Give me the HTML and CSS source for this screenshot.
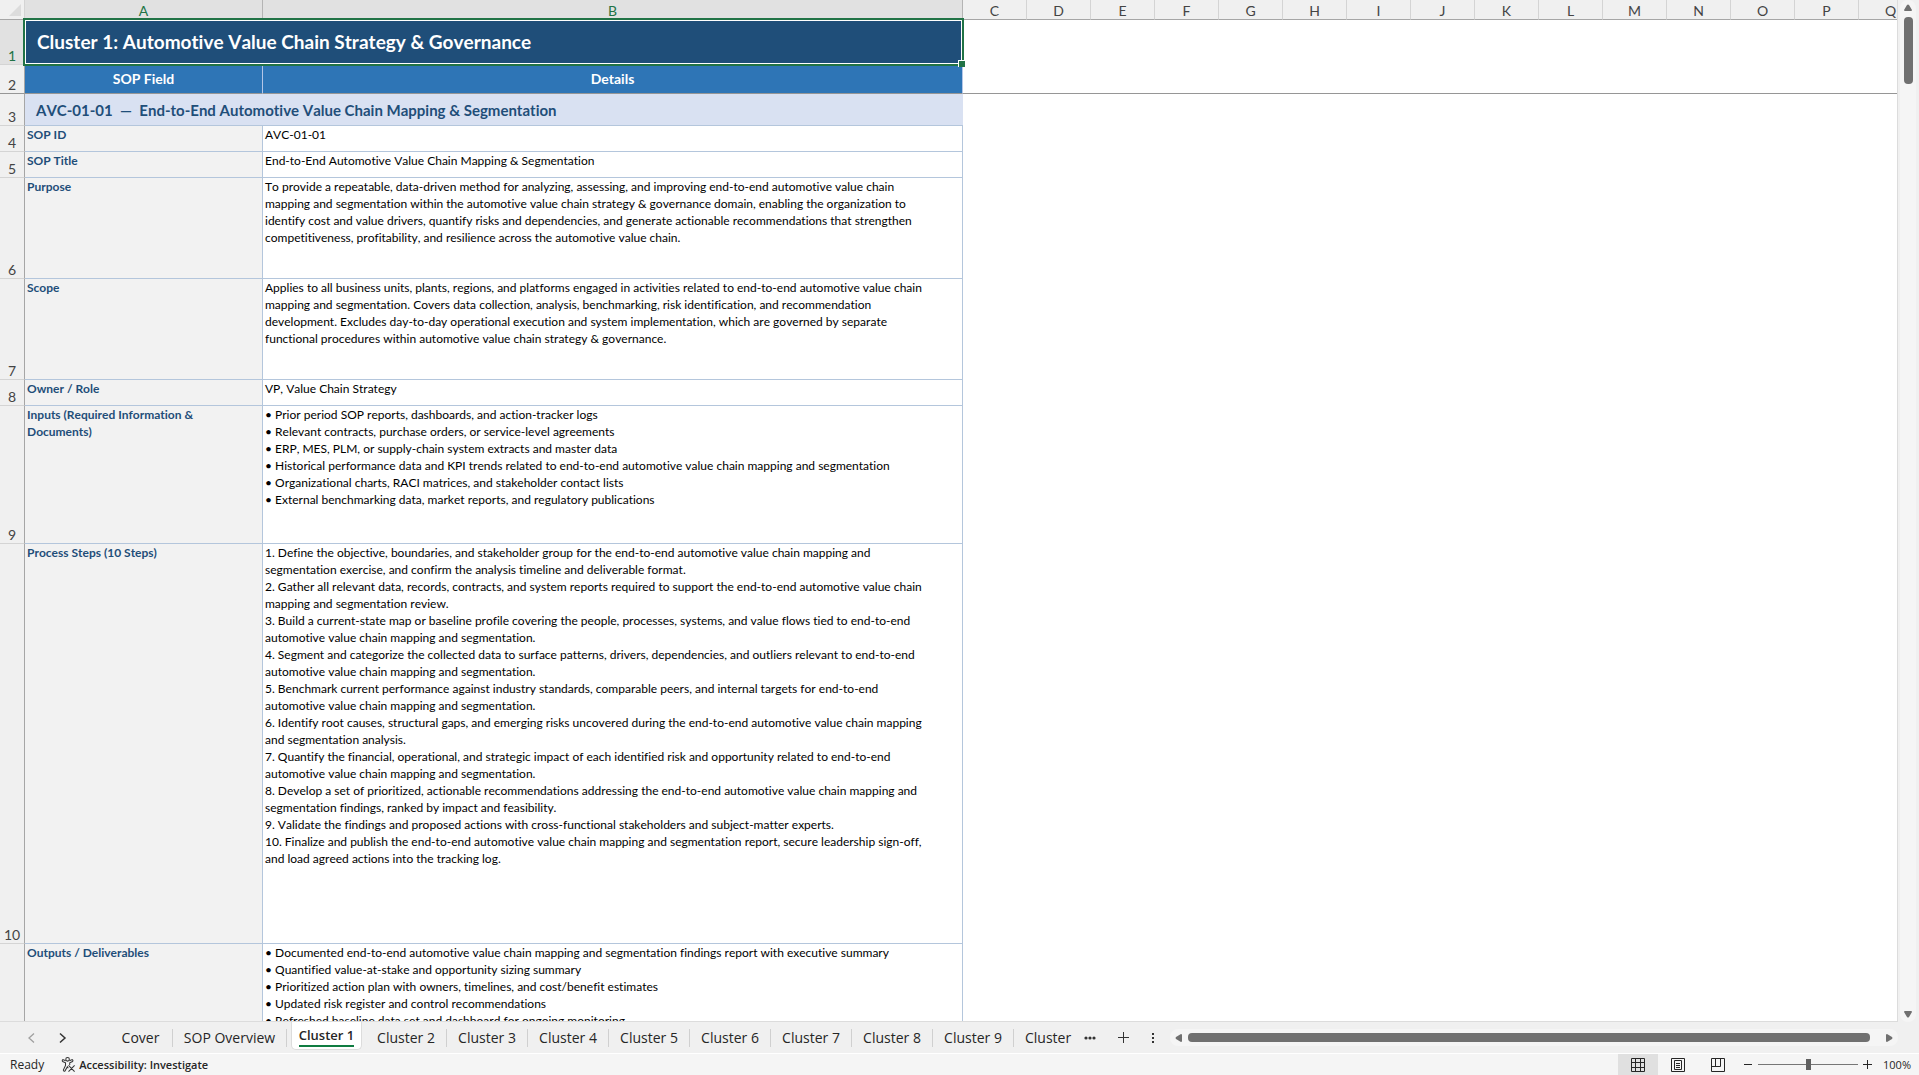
FILE: index.html
```html
<!DOCTYPE html>
<html lang="en">
<head>
    <meta charset="UTF-8">
    <meta name="viewport" content="width=device-width, initial-scale=1.0">
    <title>Cluster 1 - SOP Workbook</title>
    <link rel="stylesheet" href="styles.css">
</head>
<body>
    <div class="main">
        <div class="sheet">
            <table class="grid">
                <colgroup>
                    <col class="col-num"><col class="col-a"><col class="col-b">
                    <col class="col"><col class="col"><col class="col"><col class="col"><col class="col">
                    <col class="col"><col class="col"><col class="col"><col class="col"><col class="col">
                    <col class="col"><col class="col"><col class="col"><col class="col"><col class="col">
                </colgroup>
                <thead>
                    <tr>
                        <th class="corner"><svg width="12" height="12" viewBox="0 0 12 12"><path d="M12 0V12H0Z" fill="#dcdcdc"/></svg></th>
                        <th class="active">A</th><th class="active">B</th>
                        <th>C</th><th>D</th><th>E</th><th>F</th><th>G</th><th>H</th><th>I</th><th>J</th>
                        <th>K</th><th>L</th><th>M</th><th>N</th><th>O</th><th>P</th><th>Q</th>
                    </tr>
                </thead>
                <tbody>
                    <tr class="row-title">
                        <th class="active">1</th>
                        <td class="title" colspan="2">Cluster 1: Automotive Value Chain Strategy &amp; Governance<span class="selection"></span></td>
                        <td colspan="15"></td>
                    </tr>
                    <tr class="row-head">
                        <th>2</th>
                        <td class="head">SOP Field</td>
                        <td class="head">Details</td>
                        <td colspan="15"></td>
                    </tr>
                    <tr class="row-section">
                        <th>3</th>
                        <td class="section" colspan="2">AVC-01-01&nbsp; —&nbsp; End-to-End Automotive Value Chain Mapping &amp; Segmentation</td>
                    </tr>
                    <tr class="row-small">
                        <th>4</th>
                        <td class="field">SOP ID</td>
                        <td class="details">AVC-01-01</td>
                    </tr>
                    <tr class="row-small">
                        <th>5</th>
                        <td class="field">SOP Title</td>
                        <td class="details">End-to-End Automotive Value Chain Mapping &amp; Segmentation</td>
                    </tr>
                    <tr class="row-medium">
                        <th>6</th>
                        <td class="field">Purpose</td>
                        <td class="details">To provide a repeatable, data-driven method for analyzing, assessing, and improving end-to-end automotive value chain<br>
                            mapping and segmentation within the automotive value chain strategy &amp; governance domain, enabling the organization to<br>
                            identify cost and value drivers, quantify risks and dependencies, and generate actionable recommendations that strengthen<br>
                            competitiveness, profitability, and resilience across the automotive value chain.</td>
                    </tr>
                    <tr class="row-medium">
                        <th>7</th>
                        <td class="field">Scope</td>
                        <td class="details">Applies to all business units, plants, regions, and platforms engaged in activities related to end-to-end automotive value chain<br>
                            mapping and segmentation. Covers data collection, analysis, benchmarking, risk identification, and recommendation<br>
                            development. Excludes day-to-day operational execution and system implementation, which are governed by separate<br>
                            functional procedures within automotive value chain strategy &amp; governance.</td>
                    </tr>
                    <tr class="row-small">
                        <th>8</th>
                        <td class="field">Owner / Role</td>
                        <td class="details">VP, Value Chain Strategy</td>
                    </tr>
                    <tr class="row-inputs">
                        <th>9</th>
                        <td class="field">Inputs (Required Information &amp;<br>Documents)</td>
                        <td class="details">• Prior period SOP reports, dashboards, and action-tracker logs<br>
                            • Relevant contracts, purchase orders, or service-level agreements<br>
                            • ERP, MES, PLM, or supply-chain system extracts and master data<br>
                            • Historical performance data and KPI trends related to end-to-end automotive value chain mapping and segmentation<br>
                            • Organizational charts, RACI matrices, and stakeholder contact lists<br>
                            • External benchmarking data, market reports, and regulatory publications</td>
                    </tr>
                    <tr class="row-steps">
                        <th>10</th>
                        <td class="field">Process Steps (10 Steps)</td>
                        <td class="details">1. Define the objective, boundaries, and stakeholder group for the end-to-end automotive value chain mapping and<br>
                            segmentation exercise, and confirm the analysis timeline and deliverable format.<br>
                            2. Gather all relevant data, records, contracts, and system reports required to support the end-to-end automotive value chain<br>
                            mapping and segmentation review.<br>
                            3. Build a current-state map or baseline profile covering the people, processes, systems, and value flows tied to end-to-end<br>
                            automotive value chain mapping and segmentation.<br>
                            4. Segment and categorize the collected data to surface patterns, drivers, dependencies, and outliers relevant to end-to-end<br>
                            automotive value chain mapping and segmentation.<br>
                            5. Benchmark current performance against industry standards, comparable peers, and internal targets for end-to-end<br>
                            automotive value chain mapping and segmentation.<br>
                            6. Identify root causes, structural gaps, and emerging risks uncovered during the end-to-end automotive value chain mapping<br>
                            and segmentation analysis.<br>
                            7. Quantify the financial, operational, and strategic impact of each identified risk and opportunity related to end-to-end<br>
                            automotive value chain mapping and segmentation.<br>
                            8. Develop a set of prioritized, actionable recommendations addressing the end-to-end automotive value chain mapping and<br>
                            segmentation findings, ranked by impact and feasibility.<br>
                            9. Validate the findings and proposed actions with cross-functional stakeholders and subject-matter experts.<br>
                            10. Finalize and publish the end-to-end automotive value chain mapping and segmentation report, secure leadership sign-off,<br>
                            and load agreed actions into the tracking log.</td>
                    </tr>
                    <tr class="row-outputs">
                        <th></th>
                        <td class="field">Outputs / Deliverables</td>
                        <td class="details">• Documented end-to-end automotive value chain mapping and segmentation findings report with executive summary<br>
                            • Quantified value-at-stake and opportunity sizing summary<br>
                            • Prioritized action plan with owners, timelines, and cost/benefit estimates<br>
                            • Updated risk register and control recommendations<br>
                            • Refreshed baseline data set and dashboard for ongoing monitoring</td>
                    </tr>
                </tbody>
            </table>
        </div>
        <div class="vscroll">
            <button class="arrow" aria-label="Scroll up"><svg width="10" height="8" viewBox="0 0 10 8"><path d="M4 1Q5 0 6 1L9 6Q9 7 8 7H2Q1 7 1 6Z"/></svg></button>
            <div class="vthumb"></div>
            <button class="arrow" aria-label="Scroll down"><svg width="10" height="8" viewBox="0 0 10 8"><path d="M4 7Q5 8 6 7L9 2Q9 1 8 1H2Q1 1 1 2Z"/></svg></button>
        </div>
    </div>

    <div class="tabbar">
        <div class="tabnav">
            <button aria-label="Previous sheet"><svg width="8" height="12" viewBox="0 0 8 12"><path d="M7 1.500L2 6L7 10.500" fill="none" stroke="#a0a0a0" stroke-width="1.3"/></svg></button>
            <button aria-label="Next sheet"><svg width="8" height="12" viewBox="0 0 8 12"><path d="M1 1.500L6 6L1 10.500" fill="none" stroke="#333" stroke-width="1.5"/></svg></button>
        </div>
        <div class="tabs">
            <button class="tab cover">Cover</button>
            <button class="tab overview">SOP Overview</button>
            <button class="tab current"><span>Cluster 1</span></button>
            <button class="tab">Cluster 2</button>
            <button class="tab">Cluster 3</button>
            <button class="tab">Cluster 4</button>
            <button class="tab">Cluster 5</button>
            <button class="tab">Cluster 6</button>
            <button class="tab">Cluster 7</button>
            <button class="tab">Cluster 8</button>
            <button class="tab">Cluster 9</button>
            <button class="tab cut">Cluster 10</button>
        </div>
        <div class="tabtools">
            <button aria-label="More sheets"><svg width="12" height="4" viewBox="0 0 12 4" fill="#333"><circle cx="2" cy="2" r="1.6"/><circle cx="6" cy="2" r="1.6"/><circle cx="10" cy="2" r="1.6"/></svg></button>
            <button aria-label="New sheet"><svg width="12" height="12" viewBox="0 0 12 12"><path d="M5.500 0V11M0 5.500H11" fill="none" stroke="#333"/></svg></button>
            <button aria-label="Resize"><svg width="3" height="12" viewBox="0 0 3 12" fill="#333"><path d="M0 1H2V3H0ZM0 5H2V7H0ZM0 9H2V11H0Z"/></svg></button>
        </div>
        <div class="hscroll">
            <button class="arrow" aria-label="Scroll left"><svg width="8" height="10" viewBox="0 0 8 10"><path d="M1 4Q0 5 1 6L6 9Q7 9 7 8V2Q7 1 6 1Z"/></svg></button>
            <div class="hthumb"></div>
            <button class="arrow" aria-label="Scroll right"><svg width="8" height="10" viewBox="0 0 8 10"><path d="M7 4Q8 5 7 6L2 9Q1 9 1 8V2Q1 1 2 1Z"/></svg></button>
        </div>
    </div>

    <div class="statusbar">
        <span class="ready">Ready</span>
        <button class="access">
            <svg width="15" height="15" viewBox="0 0 15 16" fill="none" stroke="#333" stroke-width="1.1"><circle cx="6.500" cy="2.500" r="1.900"/><path d="M4.500 4L1.500 2.800Q0.300 3.600 1.300 4.800L4.300 6.200V9L2 14Q2.400 15.700 3.700 15L6.300 10.500L7.300 12M8.500 4L11.500 2.800Q12.800 3.600 11.800 4.800L8.800 6.200V8.500M7.500 9L14 15.500M14 9L7.500 15.500"/></svg>
            Accessibility: Investigate
        </button>
        <div class="views">
            <button class="view on" aria-label="Normal"><svg width="14" height="14" viewBox="0 0 14 14"><path d="M0.500 0.500H13.500V13.500H0.500ZM4.500 1V13M9.500 1V13M1 4.500H13M1 9.500H13"/></svg></button>
            <button class="view" aria-label="Page Layout"><svg width="14" height="14" viewBox="0 0 14 14"><path d="M0.500 0.500H13.500V13.500H0.500ZM3.500 2.500H10.500V11.500H3.500ZM5 5.500H9M5 7.500H9M5 9.500H9"/></svg></button>
            <button class="view" aria-label="Page Break Preview"><svg width="14" height="14" viewBox="0 0 14 14"><path d="M0.500 0.500H13.500V13.500H0.500ZM4.500 1V8.500M9.500 1V8.500M1 8.500H9.500"/></svg></button>
        </div>
        <div class="zoombar">
            <button aria-label="Zoom out"><svg width="9" height="9" viewBox="0 0 9 9"><path d="M0 4.500H8"/></svg></button>
            <input type="range" min="0" max="200" value="100" aria-label="Zoom">
            <button aria-label="Zoom in"><svg width="9" height="9" viewBox="0 0 9 9"><path d="M0 4.500H9M4.500 0V9"/></svg></button>
            <button class="percent">100%</button>
        </div>
    </div>
</body>
</html>
```

FILE: styles.css
```css
* {
    box-sizing: border-box;
}

body {
    margin: 0;
    height: 100vh;
    display: flex;
    flex-direction: column;
    overflow: hidden;
    background: #f0f0f0;
    font-family: "Open Sans", "Liberation Sans", sans-serif;
    color: #262626;
}

button {
    border: none;
    padding: 0;
    background: none;
    font-family: inherit;
    color: inherit;
    display: flex;
    align-items: center;
    justify-content: center;
}

/* worksheet */
.main {
    flex: 1;
    min-height: 0;
    display: flex;
}

.sheet {
    flex: 1;
    min-width: 0;
    overflow: hidden;
    background: white;
    border-right: 1px solid #dcdcdc;
    border-bottom: 1px solid #dcdcdc;
}

.grid {
    table-layout: fixed;
    width: 1923px;
    border-collapse: separate;
    border-spacing: 0;
    font-family: Lato, "Liberation Sans", sans-serif;
    font-kerning: none;
    font-variant-ligatures: none;
}

.col-num { width: 25px; }
.col-a { width: 238px; }
.col-b { width: 700px; }
.col { width: 64px; }

.grid th {
    padding: 0;
    vertical-align: bottom;
    background: #f0f0f0;
    color: #444;
    font-size: 14px;
    line-height: 16px;
    font-weight: normal;
}

thead th {
    height: 20px;
    border-right: 1px solid #d4d4d4;
    border-bottom: 1px solid #a6a6a6;
}

.corner svg {
    display: block;
    margin: 0 3px 3px auto;
}

.grid th.active {
    background: #e1e1e1;
    color: #217346;
}

thead th.active {
    border-right-color: #b4b4b4;
}

tbody th {
    border-right: 1px solid #a6a6a6;
    border-bottom: 1px solid #d4d4d4;
}

.grid td {
    padding: 0;
}

.row-title { height: 45px; }
.row-head { height: 29px; }
.row-section { height: 32px; }
.row-small { height: 26px; }
.row-medium { height: 101px; }
.row-inputs { height: 138px; }
.row-steps { height: 400px; }
.row-outputs { height: 138px; }

.grid .title {
    position: relative;
    padding: 0 0 2px 12px;
    background: #1f4e79;
    color: white;
    font-size: 19px;
    font-weight: bold;
}

.selection {
    position: absolute;
    inset: -2px -1px -1px -2px;
    border: 2px solid #217346;
    box-shadow: inset 0 0 0 1px white;
}

.selection::after {
    content: "";
    position: absolute;
    right: -3px;
    bottom: -3px;
    width: 6px;
    height: 6px;
    background: #217346;
    border-top: 1px solid white;
    border-left: 1px solid white;
}

.grid .head {
    background: #2e75b6;
    border-right: 1px solid #b4c6e7;
    color: white;
    font-size: 14px;
    line-height: 16px;
    font-weight: bold;
    text-align: center;
}

.grid .row-head th,
.grid .row-head td {
    border-bottom: 1px solid #969696;
}

.grid .section {
    padding-left: 11px;
    background: #d9e1f2;
    border-bottom: 1px solid #b4c6dc;
    color: #1f4e79;
    font-size: 15px;
    font-weight: bold;
}

.grid .field,
.grid .details {
    vertical-align: top;
    padding: 0 2px;
    border-right: 1px solid #b4c6dc;
    border-bottom: 1px solid #b4c6dc;
    font-size: 12px;
    line-height: 17px;
    white-space: nowrap;
}

.grid .field {
    background: #f2f2f2;
    color: #1f4e79;
    font-weight: bold;
}

.grid .details {
    color: black;
}

/* scrollbars */
.vscroll {
    width: 16px;
    margin: 0 3px 0 2px;
    padding: 4px 0;
    display: flex;
    flex-direction: column;
    align-items: center;
    gap: 5px;
    border-radius: 8px;
    background: #f5f5f5;
}

.arrow svg {
    fill: #707070;
}

.vthumb {
    width: 9px;
    height: 67px;
    margin-bottom: auto;
    border-radius: 4px;
    background: #707070;
}

.hscroll {
    flex: 1;
    height: 17px;
    margin-right: 21px;
    padding: 0 5px;
    display: flex;
    align-items: center;
    gap: 5px;
    border-radius: 8px;
    background: #f5f5f5;
}

.hthumb {
    flex: 1;
    height: 9px;
    margin-right: 10px;
    border-radius: 4px;
    background: #707070;
}

/* sheet tabs */
.tabbar {
    height: 32px;
    flex-shrink: 0;
    display: flex;
    align-items: center;
    border-bottom: 1px solid white;
}

.tabnav {
    width: 102px;
    padding-left: 27px;
    display: flex;
    gap: 24px;
}

.tabs {
    width: 973px;
    height: 100%;
    display: flex;
    align-items: center;
    overflow: hidden;
}

.tab {
    width: 81px;
    height: 18px;
    flex-shrink: 0;
    border-right: 1px solid #d0d0d0;
    font-size: 14px;
    line-height: 18px;
}

.cover {
    width: 71px;
    padding-left: 7px;
}

.overview {
    width: 114px;
}

.current {
    width: 71px;
    height: 28px;
    margin: 0 4px;
    align-self: flex-start;
    border: 1px solid #dcdcdc;
    border-top: none;
    border-radius: 0 0 5px 5px;
    background: white;
    font-weight: 600;
    font-size: 13px;
}

.current span {
    border-bottom: 2px solid #107c41;
    line-height: 20px;
}

.cut {
    width: 62px;
    padding-left: 11px;
    justify-content: flex-start;
    border: none;
    overflow: hidden;
    white-space: nowrap;
}

.tabtools {
    width: 95px;
    padding-left: 9px;
    display: flex;
    align-items: center;
    gap: 22px;
}

/* status bar */
.statusbar {
    height: 21px;
    flex-shrink: 0;
    padding-left: 10px;
    display: flex;
    align-items: center;
    background: #f5f5f5;
    font-size: 12px;
}

.access {
    margin-left: 17px;
    gap: 3px;
    font-size: 11px;
    font-weight: 600;
}

.views {
    height: 100%;
    margin-left: auto;
    display: flex;
}

.view {
    width: 40px;
    height: 100%;
}

.view.on {
    background: #e0e0e0;
}

.view svg,
.zoombar svg {
    fill: none;
    stroke: #262626;
    stroke-width: 1;
}

.zoombar {
    display: flex;
    align-items: center;
    gap: 5px;
    padding: 0 8px 0 6px;
}

.zoombar input {
    appearance: none;
    width: 100px;
    height: 12px;
    margin: 0;
    background: linear-gradient(#767676, #767676) center / 100% 1px no-repeat;
}

.zoombar input::-webkit-slider-thumb {
    appearance: none;
    width: 5px;
    height: 11px;
    background: #606060;
}

.percent {
    margin-left: 6px;
    font-size: 11px;
}
```
